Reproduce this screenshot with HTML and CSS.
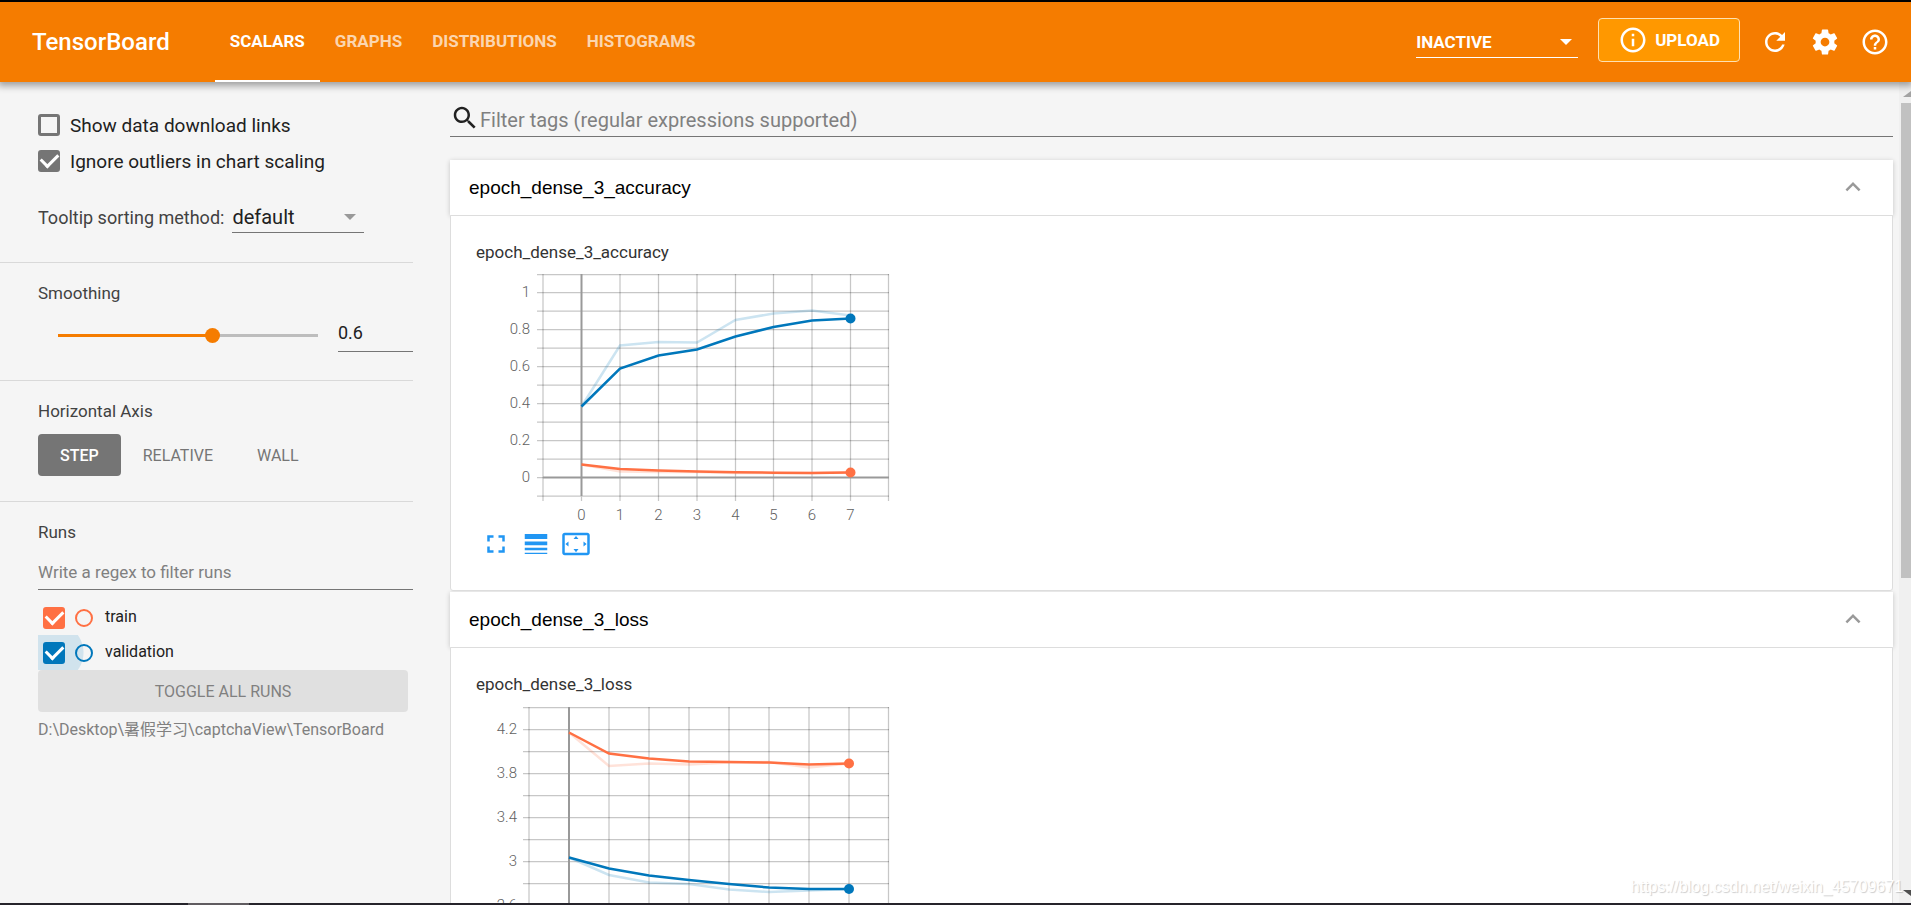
FILE: index.html
```html
<!DOCTYPE html>
<html lang="en">
<head>
    <meta charset="UTF-8">
    <meta name="viewport" content="width=device-width, initial-scale=1.0">
    <title>TensorBoard</title>
    <link rel="stylesheet" href="styles.css">
</head>
<body>
    <header class="toolbar">
        <h1 class="brand">TensorBoard</h1>
        <nav class="tabs">
            <a class="tab active" href="#scalars">SCALARS</a>
            <a class="tab" href="#graphs">GRAPHS</a>
            <a class="tab" href="#distributions">DISTRIBUTIONS</a>
            <a class="tab" href="#histograms">HISTOGRAMS</a>
        </nav>
        <div class="select-wrap inactive-select">
            <select aria-label="Inactive plugins">
                <option>INACTIVE</option>
            </select>
            <svg class="caret" viewBox="0 0 12 6"><path d="M0 0h12L6 6z"/></svg>
        </div>
        <button class="upload-button">
            <svg class="icon" viewBox="0 0 24 24"><path d="M11 17h2v-6h-2v6zm1-15C6.480 2 2 6.480 2 12s4.480 10 10 10 10-4.480 10-10S17.520 2 12 2zm0 18c-4.410 0-8-3.590-8-8s3.590-8 8-8 8 3.590 8 8-3.590 8-8 8zM11 9h2V7h-2v2z"/></svg>
            UPLOAD
        </button>
        <div class="actions">
            <button class="icon-button" aria-label="Reload">
                <svg class="icon" viewBox="0 0 24 24"><path d="M17.650 6.350C16.200 4.900 14.210 4 12 4c-4.420 0-7.990 3.580-7.990 8s3.570 8 7.990 8c3.730 0 6.840-2.550 7.730-6h-2.080c-.82 2.330-3.040 4-5.650 4-3.310 0-6-2.690-6-6s2.690-6 6-6c1.660 0 3.140.69 4.220 1.780L13 11h7V4l-2.350 2.350z"/></svg>
            </button>
            <button class="icon-button" aria-label="Settings">
                <svg class="icon" viewBox="0 0 24 24"><path d="M19.430 12.980c.04-.32.07-.64.07-.98s-.03-.66-.07-.98l2.110-1.650c.19-.15.24-.42.12-.64l-2-3.460c-.12-.22-.39-.3-.61-.22l-2.490 1c-.52-.4-1.080-.73-1.690-.98l-.38-2.650C14.460 2.180 14.250 2 14 2h-4c-.25 0-.46.18-.49.42l-.38 2.650c-.61.25-1.170.59-1.690.98l-2.490-1c-.23-.09-.49 0-.61.22l-2 3.460c-.13.22-.07.49.12.64l2.110 1.650c-.04.32-.07.65-.07.98s.03.66.07.98l-2.110 1.650c-.19.15-.24.42-.12.64l2 3.460c.12.22.39.3.61.22l2.490-1c.52.4 1.080.73 1.690.98l.38 2.650c.03.24.24.42.49.42h4c.25 0 .46-.18.49-.42l.38-2.650c.61-.25 1.170-.59 1.690-.98l2.490 1c.23.09.49 0 .61-.22l2-3.460c.12-.22.07-.49-.12-.64l-2.110-1.650zM12 15.500c-1.930 0-3.500-1.570-3.500-3.500s1.570-3.500 3.500-3.500 3.500 1.570 3.500 3.500-1.570 3.500-3.500 3.500z"/></svg>
            </button>
            <button class="icon-button" aria-label="Help">
                <svg class="icon" viewBox="0 0 24 24"><path d="M11 18h2v-2h-2v2zm1-16C6.480 2 2 6.480 2 12s4.480 10 10 10 10-4.480 10-10S17.520 2 12 2zm0 18c-4.410 0-8-3.590-8-8s3.590-8 8-8 8 3.590 8 8-3.590 8-8 8zm0-14c-2.210 0-4 1.790-4 4h2c0-1.100.9-2 2-2s2 .9 2 2c0 2-3 1.750-3 5h2c0-2.250 3-2.500 3-5 0-2.210-1.790-4-4-4z"/></svg>
            </button>
        </div>
    </header>

    <div class="content">
        <aside class="sidebar">
            <section class="group options">
                <label class="option"><input class="check" type="checkbox">Show data download links</label>
                <label class="option"><input class="check" type="checkbox" checked>Ignore outliers in chart scaling</label>
                <div class="sorting">
                    <label for="sorting">Tooltip sorting method:</label>
                    <div class="select-wrap sorting-select">
                        <select id="sorting">
                            <option>default</option>
                        </select>
                        <svg class="caret" viewBox="0 0 12 6"><path d="M0 0h12L6 6z"/></svg>
                    </div>
                </div>
            </section>

            <section class="group smoothing">
                <h2>Smoothing</h2>
                <div class="slider-row">
                    <input class="slider" type="range" min="0" max="1" step="0.1" value="0.6" aria-label="Smoothing">
                    <input class="number" type="text" value="0.6" aria-label="Smoothing value">
                </div>
            </section>

            <section class="group axis">
                <h2>Horizontal Axis</h2>
                <div class="axis-buttons">
                    <button class="axis-button selected">STEP</button>
                    <button class="axis-button">RELATIVE</button>
                    <button class="axis-button">WALL</button>
                </div>
            </section>

            <section class="group runs">
                <h2>Runs</h2>
                <input class="runs-filter" type="text" placeholder="Write a regex to filter runs" aria-label="Filter runs">
                <div class="run train">
                    <input class="check" type="checkbox" id="run-train" checked>
                    <input class="ring" type="radio" name="only-run" aria-label="Only train">
                    <label for="run-train">train</label>
                </div>
                <div class="run validation">
                    <input class="check" type="checkbox" id="run-validation" checked>
                    <input class="ring" type="radio" name="only-run" aria-label="Only validation">
                    <label for="run-validation">validation</label>
                </div>
                <button class="toggle-button">TOGGLE ALL RUNS</button>
                <p class="logdir">D:\Desktop\暑假学习\captchaView\TensorBoard</p>
            </section>
        </aside>

        <main class="main">
            <div class="tag-filter">
                <svg class="icon" viewBox="0 0 24 24"><path d="M15.500 14h-.79l-.28-.27C15.410 12.590 16 11.110 16 9.500 16 5.910 13.090 3 9.500 3S3 5.910 3 9.500 5.910 16 9.500 16c1.610 0 3.090-.59 4.230-1.570l.27.28v.79l5 4.990L20.490 19l-4.990-5zm-6 0C7.010 14 5 11.990 5 9.500S7.010 5 9.500 5 14 7.010 14 9.500 11.990 14 9.500 14z"/></svg>
                <input type="text" placeholder="Filter tags (regular expressions supported)" aria-label="Filter tags">
            </div>

            <section class="panel">
                <button class="panel-header">
                    epoch_dense_3_accuracy
                    <svg class="chevron" viewBox="0 0 24 24"><path d="M12 8l-6 6 1.410 1.410L12 10.830l4.590 4.580L18 14z"/></svg>
                </button>
                <div class="panel-body">
                    <h3>epoch_dense_3_accuracy</h3>
                    <svg class="chart" viewBox="0 0 416 256">
                        <path class="grid" d="M67 4V231M144 4V231M182.500 4V231M221 4V231M259.500 4V231M297.500 4V231M336 4V231M374.500 4V231M412.500 4V231"/>
                        <path class="grid" d="M61 4.500H413M61 22.500H413M61 41H413M61 59.500H413M61 78H413M61 96.500H413M61 115H413M61 133.500H413M61 152H413M61 170.500H413M61 189H413M61 226H413M61 207.500H67M105.500 226V231"/>
                        <path class="zero" d="M105.500 4V226M67 207.500H413"/>
                        <g class="y-labels">
                            <text x="54" y="27">1</text>
                            <text x="54" y="64">0.8</text>
                            <text x="54" y="101">0.6</text>
                            <text x="54" y="138">0.4</text>
                            <text x="54" y="175">0.2</text>
                            <text x="54" y="212">0</text>
                        </g>
                        <g class="x-labels">
                            <text x="105.500" y="250">0</text>
                            <text x="144" y="250">1</text>
                            <text x="182.500" y="250">2</text>
                            <text x="221" y="250">3</text>
                            <text x="259.500" y="250">4</text>
                            <text x="297.500" y="250">5</text>
                            <text x="336" y="250">6</text>
                            <text x="374.500" y="250">7</text>
                        </g>
                        <polyline class="line train-line raw" points="105.500,194.500 144,201.500 182.500,202 221,202 259.500,203 297.500,203 336,203 374.500,202"/>
                        <polyline class="line validation-line raw" points="105.500,136.500 144,75.500 182.500,72 221,72.500 259.500,50 297.500,43.500 336,40.500 374.500,45.500"/>
                        <polyline class="line train-line" points="105.500,194.500 144,199 182.500,200.500 221,201.500 259.500,202.300 297.500,202.700 336,203 374.500,202.500"/>
                        <polyline class="line validation-line" points="105.500,136.500 144,98.500 182.500,85.500 221,79.500 259.500,66.500 297.500,57 336,50.500 374.500,48.500"/>
                        <circle class="train-dot" cx="374.500" cy="202.500" r="5"/>
                        <circle class="validation-dot" cx="374.500" cy="48.500" r="5"/>
                    </svg>
                    <div class="chart-actions">
                        <button class="icon-button" aria-label="Toggle fullscreen">
                            <svg class="icon" viewBox="0 0 24 24"><path d="M7 14H5v5h5v-2H7v-3zm-2-4h2V7h3V5H5v5zm12 7h-3v2h5v-5h-2v3zM14 5v2h3v3h2V5h-5z"/></svg>
                        </button>
                        <button class="icon-button" aria-label="Toggle log scale">
                            <svg class="icon" viewBox="0 0 24 24"><path d="M3 17h18v-2H3v2zm0 3h18v-1H3v1zm0-7h18v-3H3v3zm0-9v4h18V4H3z"/></svg>
                        </button>
                        <button class="icon-button" aria-label="Fit domain to data">
                            <svg class="icon" viewBox="0 0 24 24"><path d="M12 5.500L10 8h4l-2-2.500zm6 4.500v4l2.500-2L18 10zM6 10l-2.500 2L6 14v-4zm8 6h-4l2 2.500 2-2.500zm7-13H3c-1.100 0-2 .9-2 2v14c0 1.100.9 2 2 2h18c1.100 0 2-.9 2-2V5c0-1.100-.9-2-2-2zm0 16.010H3V4.990h18v14.020z"/></svg>
                        </button>
                    </div>
                </div>
            </section>

            <section class="panel">
                <button class="panel-header">
                    epoch_dense_3_loss
                    <svg class="chevron" viewBox="0 0 24 24"><path d="M12 8l-6 6 1.410 1.410L12 10.830l4.590 4.580L18 14z"/></svg>
                </button>
                <div class="panel-body">
                    <h3>epoch_dense_3_loss</h3>
                    <svg class="chart" viewBox="0 0 416 256">
                        <path class="grid" d="M53 5V231M133 5V231M173 5V231M213 5V231M253 5V231M293 5V231M333 5V231M373 5V231M412.500 5V231"/>
                        <path class="grid" d="M47 5.500H413M47 27.500H413M47 49.500H413M47 71.500H413M47 93.500H413M47 115.500H413M47 137.500H413M47 159.500H413M47 181.500H413M47 203.500H413M47 225.500H413"/>
                        <path class="zero" d="M93 5V226"/>
                        <g class="y-labels">
                            <text x="41" y="32">4.2</text>
                            <text x="41" y="76">3.8</text>
                            <text x="41" y="120">3.4</text>
                            <text x="41" y="164">3</text>
                            <text x="41" y="208">2.6</text>
                        </g>
                        <polyline class="line train-line raw" points="93,30.500 133,64 173,61.500 213,62.500 253,60.500 293,60 333,65.500 373,61.500"/>
                        <polyline class="line validation-line raw" points="93,155.500 133,173 173,180.500 213,182 253,187.500 293,190 333,188.500 373,187"/>
                        <polyline class="line train-line" points="93,30.500 133,51.500 173,56.500 213,59.500 253,60 293,60.500 333,62.500 373,61.500"/>
                        <polyline class="line validation-line" points="93,155.500 133,166.500 173,173.500 213,178 253,182 293,185.500 333,187 373,187"/>
                        <circle class="train-dot" cx="373" cy="61.500" r="5"/>
                        <circle class="validation-dot" cx="373" cy="187" r="5"/>
                    </svg>
                </div>
            </section>
        </main>

        <div class="scrollbar">
            <svg class="scroll-arrow" viewBox="0 0 12 6"><path fill="#a3a3a3" d="M4 6L12 0v6z"/></svg>
            <div class="scroll-thumb"></div>
            <svg class="scroll-arrow" viewBox="0 0 12 6"><path fill="#505050" d="M4 0h8v6z"/></svg>
        </div>

        <span class="watermark">https://blog.csdn.net/weixin_45709671</span>
    </div>

    <footer class="taskbar"><span></span></footer>
</body>
</html>
```
FILE: styles.css
```css
* {
    margin: 0;
    padding: 0;
    box-sizing: border-box;
}

body {
    display: flex;
    flex-direction: column;
    height: 100vh;
    overflow: hidden;
    background: #f5f5f5;
    color: #212121;
    font-family: Roboto, "Noto Sans CJK SC", sans-serif;
    font-size: 18px;
}

button,
input,
select {
    border: none;
    border-radius: 0;
    outline: none;
    background: none;
    color: inherit;
    font: inherit;
    appearance: none;
}

svg {
    display: block;
    flex: none;
}

.icon {
    width: 30px;
    height: 30px;
    fill: currentColor;
}

/* Top bar */
.toolbar {
    display: flex;
    flex: none;
    align-items: center;
    height: 82px;
    padding: 0 21px 0 32px;
    border-top: 2px solid #000;
    background: #f57c00;
    box-shadow: 0 2px 7px 2px rgba(0, 0, 0, 0.35);
    color: #fff;
    font-weight: 500;
    position: relative;
    z-index: 1;
}

.brand {
    margin-right: 45px;
    font-size: 24px;
    font-weight: 500;
}

.tabs {
    display: flex;
    align-self: stretch;
    margin-right: auto;
}

.tab {
    display: flex;
    align-items: center;
    padding: 0 15px;
    border-bottom: 2px solid transparent;
    color: rgba(255, 255, 255, 0.7);
    font-size: 17px;
    font-weight: 700;
    text-decoration: none;
}

.tab.active {
    border-color: #fff;
    color: #fff;
}

.select-wrap {
    display: flex;
    align-items: center;
    border-bottom: 1px solid #757575;
}

.select-wrap select {
    flex: 1;
    min-width: 0;
}

.caret {
    width: 12px;
    height: 6px;
    margin-right: 6px;
    fill: currentColor;
}

.inactive-select {
    width: 162px;
    height: 32px;
    margin-right: 20px;
    border-color: #fff;
    font-size: 17px;
    font-weight: 700;
}

.upload-button {
    display: flex;
    align-items: center;
    gap: 7px;
    height: 44px;
    margin: 0 20px 4px 0;
    padding: 0 19px;
    border: 1px solid #ffe0b2;
    border-radius: 4px;
    background: #ff9800;
    font-size: 17px;
    font-weight: 700;
}

.actions {
    display: flex;
    gap: 20px;
}

/* Sidebar */
.content {
    display: flex;
    flex: 1;
    min-height: 0;
    position: relative;
}

.sidebar {
    flex: 0 0 413px;
}

.group {
    padding: 19px 0 0 38px;
    border-bottom: 1px solid #d9d9d9;
}

.group:last-child {
    border-bottom: none;
}

.group h2 {
    color: #424242;
    font-size: 17px;
    font-weight: 400;
    line-height: 22px;
}

.options {
    height: 181px;
    padding-top: 25px;
}

.option {
    display: flex;
    align-items: center;
    gap: 10px;
    height: 36px;
    font-size: 19px;
}

.check {
    display: grid;
    place-content: center;
    width: 22px;
    height: 22px;
    border: 3px solid #757575;
    border-radius: 3px;
}

.check:checked {
    background: #757575;
}

.check:checked::before {
    content: "";
    width: 8px;
    height: 14px;
    margin-bottom: 5px;
    border: solid #fff;
    border-width: 0 3px 3px 0;
    transform: rotate(45deg);
}

.sorting {
    display: flex;
    align-items: center;
    gap: 8px;
    margin-top: 22px;
    color: #424242;
}

.sorting-select {
    width: 132px;
    height: 32px;
    color: #212121;
    font-size: 20px;
}

.sorting-select .caret {
    margin-right: 8px;
    fill: #999;
}

.smoothing {
    height: 118px;
}

.slider-row {
    display: flex;
    align-items: flex-start;
    gap: 20px;
    margin: 10px 0 0 20px;
}

.slider {
    flex: 1;
    min-width: 0;
    height: 42px;
    background: linear-gradient(to right, #f57c00 60%, #bdbdbd 60%) center / 100% 3px no-repeat;
}

.slider::-webkit-slider-thumb {
    width: 15px;
    height: 15px;
    border-radius: 50%;
    background: #f57c00;
    appearance: none;
}

.number {
    width: 75px;
    height: 38px;
    border-bottom: 1px solid #757575;
}

.axis {
    height: 121px;
}

.axis-buttons {
    display: flex;
    margin-top: 12px;
}

.axis-button {
    height: 42px;
    padding: 0 22px;
    border-radius: 4px;
    color: #757575;
    font-size: 16px;
}

.axis-button.selected {
    background: #757575;
    color: #fff;
    font-weight: 500;
}

.runs-filter {
    width: 100%;
    height: 36px;
    margin: 11px 0 10px;
    border-bottom: 1px solid #757575;
    font-size: 17px;
}

.runs-filter::placeholder,
.tag-filter input::placeholder {
    color: #808080;
    opacity: 1;
}

.run {
    display: flex;
    align-items: center;
    height: 35px;
    padding-left: 5px;
    font-size: 16px;
}

.run .check {
    border-color: currentColor;
    background: currentColor;
}

.ring {
    width: 18px;
    height: 18px;
    margin: 0 12px 0 10px;
    border: 2px solid;
    border-radius: 50%;
}

.train {
    color: #ff7043;
}

.validation {
    background: radial-gradient(circle at 16px 50%, #d1e3ed 29px, transparent 30px);
    color: #0077bb;
}

.run label {
    margin-bottom: 2px;
    color: #212121;
}

.toggle-button {
    width: calc(100% - 5px);
    height: 42px;
    border-radius: 4px;
    background: #e0e0e0;
    color: #808080;
    font-size: 16px;
}

.logdir {
    margin-top: 7px;
    color: #808080;
    font-size: 16px;
    line-height: 22px;
}

/* Charts */
.main {
    flex: 1;
    min-width: 0;
    padding: 17px 6px 0 37px;
    overflow: hidden;
}

.tag-filter {
    display: flex;
    align-items: center;
    height: 38px;
    margin-bottom: 23px;
    border-bottom: 1px solid #757575;
}

.tag-filter input {
    flex: 1;
    padding-top: 4px;
    font-size: 20px;
}

.panel-header {
    display: flex;
    align-items: center;
    justify-content: space-between;
    width: 100%;
    height: 55px;
    padding: 0 25px 0 19px;
    background: #fff;
    box-shadow: 0 1px 5px rgba(0, 0, 0, 0.2);
    color: #000;
    font-family: "Liberation Sans", Arial, sans-serif;
    font-size: 19px;
}

.chevron {
    width: 30px;
    height: 30px;
    margin-bottom: 2px;
    fill: #999;
}

.panel-body {
    height: 376px;
    margin-bottom: 1px;
    padding: 25px 25px 0;
    border: 1px solid #ddd;
    border-radius: 0 0 3px 3px;
    background: #fff;
    position: relative;
}

.panel-body h3 {
    margin-bottom: 7px;
    color: #333;
    font-size: 17px;
    font-weight: 400;
    line-height: 22px;
}

.chart {
    width: 416px;
    height: 256px;
}

.grid {
    fill: none;
    stroke: rgba(0, 0, 0, 0.22);
    stroke-width: 1.25;
}

.zero {
    fill: none;
    stroke: #999;
    stroke-width: 2;
}

.y-labels,
.x-labels {
    fill: #616161;
    font-size: 15px;
    font-weight: 300;
    text-anchor: end;
}

.x-labels {
    text-anchor: middle;
}

.line {
    fill: none;
    stroke-width: 2.5;
}

.raw {
    opacity: 0.2;
}

.train-line {
    stroke: #ff7043;
}

.validation-line {
    stroke: #0077bb;
}

.train-dot {
    fill: #ff7043;
}

.validation-dot {
    fill: #0077bb;
}

.chart-actions {
    display: flex;
    gap: 10px;
    margin: 3px 0 0 5px;
    color: #2196f3;
}

/* Scrollbar at the edge of the window */
.scrollbar {
    display: flex;
    flex-direction: column;
    flex: 0 0 12px;
    padding: 9px 0 7px;
    background: #f0f0f0;
}

.scroll-arrow {
    width: 12px;
    height: 6px;
}

.scroll-thumb {
    flex: 0 0 59%;
    margin: 6px 0 auto 2px;
    background: #c1c1c1;
}

.watermark {
    position: absolute;
    right: 8px;
    bottom: 7px;
    color: #fff;
    font-family: "Liberation Sans", Arial, sans-serif;
    font-size: 16px;
    text-shadow: 1px 1px 1px rgba(0, 0, 0, 0.2);
}

.taskbar {
    display: flex;
    flex: none;
    height: 2px;
    padding-left: 188px;
    background: #26242b;
}

.taskbar span {
    width: 61px;
    background: #605c60;
}
```
